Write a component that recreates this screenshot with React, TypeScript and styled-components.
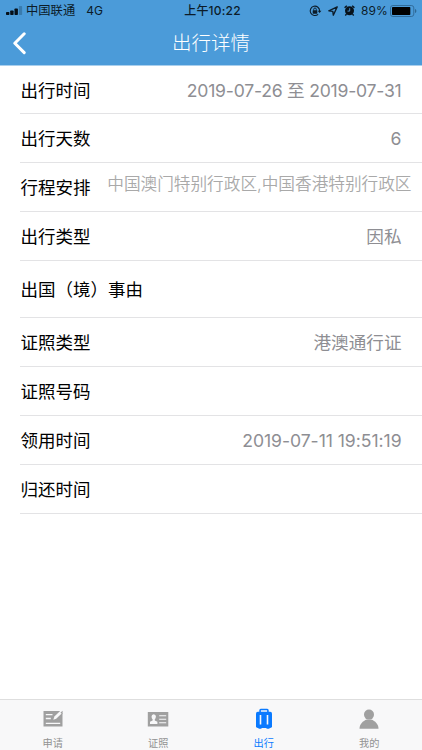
import React from "react";
import styled, { createGlobalStyle } from "styled-components";

const GlobalStyle = createGlobalStyle`
  * { box-sizing: border-box; }
  body { margin: 0; background: #fff; }
`;

const Screen = styled.div`
  display: flex;
  flex-direction: column;
  width: 100%;
  height: 100vh;
  overflow: hidden;
  background: #fff;
  font-family: Inter, "Noto Sans CJK SC", sans-serif;
  font-weight: 400;
`;

const Header = styled.header`
  flex: none;
  height: 66px;
  background: #4b9bd9;
  border-bottom: 1px solid #a9cfed;
`;

const StatusBar = styled.div`
  display: grid;
  grid-template-columns: 1fr auto 1fr;
  align-items: center;
  height: 21px;
  padding: 0 5px 0 6px;
  color: #0c1c29;
  font-size: 12px;
  line-height: 21px;
  white-space: nowrap;
`;

const StatusGroup = styled.div<{ $end?: boolean }>`
  display: flex;
  align-items: center;
  justify-content: ${(p) => (p.$end ? "flex-end" : "flex-start")};
  height: 21px;
  svg { flex: none; display: block; }
`;

const Spacer = styled.span<{ $width: number }>`
  flex: none;
  width: ${(p) => p.$width}px;
`;

const Carrier = styled.span`
  margin-left: 3px;
  font-size: 12.3px;
`;

const Network = styled.span`
  margin-left: 11px;
  font-size: 12px;
`;

const Clock = styled.span`
  padding-left: 2px;
  font-size: 12px;
  font-weight: 500;
  letter-spacing: 0.2px;
`;

const Battery = styled.span`
  margin: 0 2px 0 6px;
  font-size: 12px;
  letter-spacing: 0.1px;
`;

const NavBar = styled.div`
  display: grid;
  grid-template-columns: 60px 1fr 60px;
  align-items: center;
  height: 44px;
`;

const BackButton = styled.button`
  display: flex;
  padding: 0 0 0 12px;
  border: 0;
  background: none;
`;

const Title = styled.h1`
  margin: 0;
  color: #fff;
  font-size: 19.5px;
  font-weight: 300;
  line-height: 42px;
  text-align: center;
`;

const List = styled.main`
  flex: 1;
  padding-left: 20px;
`;

const Row = styled.div<{ $height: number }>`
  display: flex;
  align-items: center;
  justify-content: space-between;
  height: ${(p) => p.$height}px;
  padding: 2px 20.5px 0 0.5px;
  border-bottom: 1px solid #e3e3e5;
  white-space: nowrap;
`;

const Label = styled.span`
  color: #000;
  font-size: 17.5px;
  line-height: 26px;
`;

const Value = styled.span<{ $tracking?: number }>`
  color: #8e8e93;
  font-size: 17.6px;
  line-height: 26px;
  letter-spacing: ${(p) => p.$tracking ?? 0}px;
`;

const Itinerary = styled.span`
  margin: 0 -10px 8px 0;
  color: #a9a9a9;
  font-size: 16.65px;
  font-weight: 350;
  line-height: 26px;
`;

const TabBar = styled.nav`
  flex: none;
  display: grid;
  grid-template-columns: repeat(4, 1fr);
  height: 51px;
  background: #f8f8f9;
  border-top: 1px solid #dedede;
`;

const Tab = styled.a<{ $active?: boolean }>`
  display: flex;
  flex-direction: column;
  align-items: center;
  padding-top: 8px;
  color: ${(p) => (p.$active ? "#0a7aff" : "#929292")};
  font-size: 10.2px;
  line-height: 14px;
  svg { display: block; margin-bottom: 6px; color: ${(p) => (p.$active ? "#0a7aff" : "#a0a0a0")}; }
`;

const SignalIcon = () => (
  <svg width="17" height="9" viewBox="0 0 17 9">
    <g fill="#061019">
      <rect x="0" y="6" width="3.4" height="3" rx=".7" />
      <rect x="4.2" y="4.5" width="3.4" height="4.5" rx=".7" />
      <rect x="8.5" y="2.5" width="3.4" height="6.5" rx=".7" />
    </g>
    <rect x="12.9" y="0" width="3.2" height="9" rx=".7" fill="#397bae" />
  </svg>
);

const LockIcon = () => (
  <svg width="13" height="12" viewBox="0 0 13 12" fill="none" stroke="#0c1c29">
    <path d="M9.1 9.3A4.7 4.7 0 1 1 10.6 6" strokeWidth="1.1" />
    <path d="M8.7 5.8h3.7L10.6 8z" fill="#0c1c29" stroke="none" />
    <rect x="3.7" y="5.3" width="4.6" height="3.4" rx=".4" fill="#0c1c29" stroke="none" />
    <path d="M4.7 5.5V4.3a1.3 1.3 0 0 1 2.6 0v1.2" strokeWidth=".9" />
  </svg>
);

const LocationIcon = () => (
  <svg width="10" height="10" viewBox="0 0 10 10" fill="none" stroke="#0c1c29" strokeWidth="1.35" strokeLinejoin="round">
    <path d="M9.2.9.8 4.8l4 .5.5 3.9z" />
  </svg>
);

const AlarmIcon = () => (
  <svg width="11" height="11" viewBox="0 0 11 11">
    <circle cx="5.5" cy="5.8" r="4.5" fill="#07121b" />
    <path d="M.6 2.8 2.8.8M10.4 2.8 8.2.8M2.5 9.1 1.3 10.5M8.5 9.1l1.2 1.4" stroke="#07121b" strokeWidth="1.4" />
    <path d="M5.7 3.2v2.9H3.5" fill="none" stroke="#4b9bd9" strokeWidth=".9" />
  </svg>
);

const BatteryIcon = () => (
  <svg width="27" height="12" viewBox="0 0 27 12">
    <rect x=".5" y=".5" width="23.3" height="11" rx="2.4" fill="none" stroke="#2e6793" strokeWidth=".9" />
    <rect x="2" y="2" width="18.3" height="8" rx=".7" fill="#000" />
    <path d="M25 4c1.8.5 1.8 3.5 0 4z" fill="#2e6793" />
  </svg>
);

const BackIcon = () => (
  <svg width="15" height="23" viewBox="0 0 15 23" fill="none" stroke="#fff" strokeWidth="3" strokeLinecap="round" strokeLinejoin="round">
    <path d="M12.2 1.8 2.8 11.2l9.4 9.4" />
  </svg>
);

const ApplyIcon = () => (
  <svg width="20" height="22" viewBox="0 0 20 22">
    <path d="M.5 3h19v15.5H.5z" fill="currentColor" />
    <path d="M2.8 6.6h6.7M2.8 10.5h5M2.8 15.3h14.4" stroke="#f8f8f9" strokeWidth="1.3" fill="none" />
    <path d="m10.3 11.7 1.1-3.1L18.2 2l2 2.1-7 6.6z" fill="#f8f8f9" />
    <path d="m17.4 4.7 2.1-2v3.5z" fill="currentColor" />
  </svg>
);

const CardIcon = () => (
  <svg width="22" height="22" viewBox="0 0 22 22">
    <path d="M.8 4h20.5v14.5H.8z" fill="currentColor" />
    <g fill="#f8f8f9">
      <ellipse cx="6.7" cy="8.8" rx="2.2" ry="2.6" />
      <path d="M5.6 10.3h2.2v2.2l2.6 1.2V16H3v-2.3l2.6-1.2z" />
      <path d="M12.2 7.2h7v1h-7zM12.2 10.7h7v1h-7zM12.2 14.3h7v1h-7z" />
    </g>
  </svg>
);

const SuitcaseIcon = () => (
  <svg width="18" height="22" viewBox="0 0 18 22">
    <path d="M5.1 4.5V2.2q0-.7.7-.7h6.4q.7 0 .7.7v2.3" fill="none" stroke="currentColor" strokeWidth="1.6" />
    <rect x="1" y="3.8" width="16" height="16.2" rx="1.8" fill="currentColor" />
    <path d="M3.5 19.5h3v1.2h-3zM11.5 19.5h3v1.2h-3z" fill="currentColor" />
    <path d="M5.5 7v9.5M12.5 7v9.5" stroke="#f8f8f9" strokeWidth="1.6" />
  </svg>
);

const PersonIcon = () => (
  <svg width="20" height="22" viewBox="0 0 20 22" fill="currentColor">
    <circle cx="10" cy="6.6" r="5" />
    <path d="M.5 20.8c0-4.8 3.4-8 7.3-9.4h4.4c3.9 1.4 7.3 4.6 7.3 9.4z" />
  </svg>
);

export default function App() {
  return (
    <Screen>
      <GlobalStyle />
      <Header>
        <StatusBar>
          <StatusGroup>
            <SignalIcon />
            <Carrier>中国联通</Carrier>
            <Network>4G</Network>
          </StatusGroup>
          <Clock>上午10:22</Clock>
          <StatusGroup $end>
            <LockIcon />
            <Spacer $width={6} />
            <LocationIcon />
            <Spacer $width={6} />
            <AlarmIcon />
            <Battery>89%</Battery>
            <BatteryIcon />
          </StatusGroup>
        </StatusBar>
        <NavBar>
          <BackButton aria-label="返回"><BackIcon /></BackButton>
          <Title>出行详情</Title>
        </NavBar>
      </Header>
      <List>
        <Row $height={48}><Label>出行时间</Label><Value $tracking={-0.23}>2019-07-26 至 2019-07-31</Value></Row>
        <Row $height={49}><Label>出行天数</Label><Value>6</Value></Row>
        <Row $height={49}><Label>行程安排</Label><Itinerary>中国澳门特别行政区,中国香港特别行政区</Itinerary></Row>
        <Row $height={49}><Label>出行类型</Label><Value>因私</Value></Row>
        <Row $height={57}><Label>出国（境）事由</Label></Row>
        <Row $height={49}><Label>证照类型</Label><Value>港澳通行证</Value></Row>
        <Row $height={49}><Label>证照号码</Label></Row>
        <Row $height={49}><Label>领用时间</Label><Value $tracking={-0.05}>2019-07-11 19:51:19</Value></Row>
        <Row $height={49}><Label>归还时间</Label></Row>
      </List>
      <TabBar>
        <Tab><ApplyIcon />申请</Tab>
        <Tab><CardIcon />证照</Tab>
        <Tab $active><SuitcaseIcon />出行</Tab>
        <Tab><PersonIcon />我的</Tab>
      </TabBar>
    </Screen>
  );
}
